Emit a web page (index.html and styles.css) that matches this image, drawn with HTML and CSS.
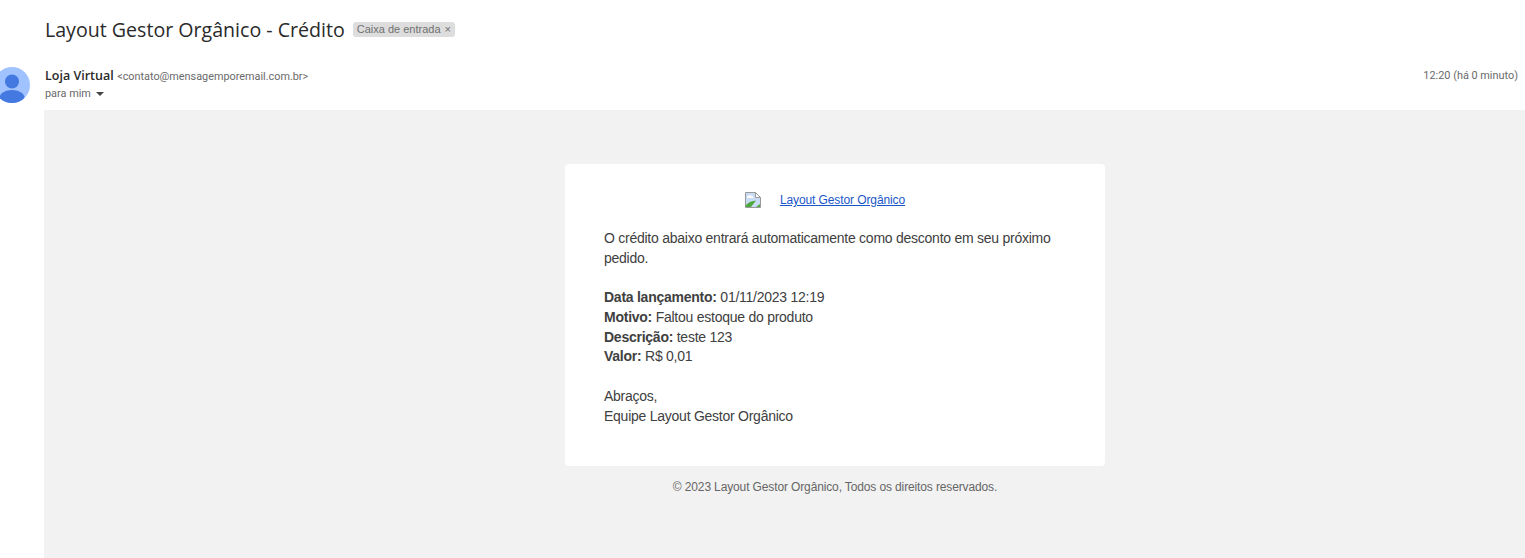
FILE: index.html
```html
<!DOCTYPE html>
<html lang="pt-BR">
<head>
  <meta charset="UTF-8">
  <title>Layout Gestor Orgânico - Crédito</title>
  <link rel="stylesheet" href="styles.css">
</head>
<body>
  <div class="subject-row">
    <h1 class="subject">Layout Gestor Orgânico - Crédito</h1>
    <span class="label">Caixa de entrada <span class="label-x">×</span></span>
  </div>

  <div class="message">
    <svg class="avatar" width="36" height="36" viewBox="0 0 36 36">
      <defs><clipPath id="avatar-clip"><circle cx="18" cy="18" r="18"/></clipPath></defs>
      <circle cx="18" cy="18" r="18" fill="#a0c3ff"/>
      <g clip-path="url(#avatar-clip)" fill="#4479e1">
        <circle cx="18" cy="14.5" r="7"/>
        <ellipse cx="18" cy="31" rx="12.5" ry="8"/>
      </g>
    </svg>
    <div class="message-main">
      <div class="message-head">
        <div>
          <div class="sender"><b class="sender-name">Loja Virtual</b> <span class="sender-mail">&lt;contato@mensagemporemail.com.br&gt;</span></div>
          <div class="to">para mim <span class="to-arrow"></span></div>
        </div>
        <div class="time">12:20 (há 0 minuto)</div>
      </div>

      <div class="mail-body">
        <div class="mail-inner">
          <div class="card">
            <div class="logo-row">
              <svg class="broken-img" width="16" height="16" viewBox="0 0 16 16">
                <path d="M.5.5h10l5 5v10H.5z" fill="#c9dcf5" stroke="#9a9a9a"/>
                <path d="M10.5.5v5h5z" fill="#fff" stroke="#9a9a9a"/>
                <path d="M2 5c1-2 4-2 5-1 1 0 2 1 1 2H2z" fill="#fff"/>
                <path d="M1 15v-2c3-3 6-4 10-4.500l-5 6.500z" fill="#4fa83d"/>
                <path d="M11 15l4-3v3z" fill="#4fa83d"/>
              </svg>
              <a class="logo-link" href="#">Layout Gestor Orgânico</a>
            </div>
            <p>O crédito abaixo entrará automaticamente como desconto em seu próximo pedido.</p>
            <p>
              <b>Data lançamento:</b> 01/11/2023 12:19<br>
              <b>Motivo:</b> Faltou estoque do produto<br>
              <b>Descrição:</b> teste 123<br>
              <b>Valor:</b> R$ 0,01
            </p>
            <p>Abraços,<br>Equipe Layout Gestor Orgânico</p>
          </div>
          <div class="copyright">© 2023 Layout Gestor Orgânico, Todos os direitos reservados.</div>
        </div>
      </div>
    </div>
  </div>
</body>
</html>
```

FILE: styles.css
```css
html, body {
  height: 558px;
  overflow: hidden;
}
body {
  margin: 0;
  font-family: "Liberation Sans", Arial, sans-serif;
  color: #222;
  background-color: #fff;
}
.subject-row {
  display: flex;
  align-items: center;
  gap: 8px;
  padding: 16px 0 0 45px;
  height: 26px;
}
.subject {
  margin: 0;
  font-family: "Open Sans", sans-serif;
  font-size: 19.6px;
  font-weight: 400;
  color: #2a2a2a;
}
.label {
  background-color: #ddd;
  border-radius: 3px;
  color: #707070;
  font-size: 11px;
  padding: 1px 4px;
  line-height: 13px;
}
.label-x {
  margin-left: 1px;
}
.message {
  display: flex;
  margin-top: 25px;
  margin-left: -6px;
  gap: 14px;
}
.avatar {
  flex: none;
}
.message-main {
  flex: 1;
  min-width: 0;
}
.message-head {
  display: flex;
  justify-content: space-between;
  height: 43px;
  padding: 0 7px 0 1px;
}
.sender {
  line-height: 15px;
}
.sender-name {
  font-family: "Open Sans", sans-serif;
  font-size: 12.5px;
  font-weight: 600;
  color: #2a2a2a;
}
.sender-mail {
  margin-left: -1px;
  font-family: "Roboto", sans-serif;
  font-size: 10.85px;
  color: #6a6a6a;
}
.to {
  font-family: "Roboto", sans-serif;
  font-size: 10.9px;
  line-height: 20px;
  color: #6a6a6a;
}
.to-arrow {
  display: inline-block;
  margin-left: 2px;
  vertical-align: middle;
  border: 4px solid transparent;
  border-top-color: #444;
  border-bottom: 0;
}
.time {
  font-family: "Roboto", sans-serif;
  font-size: 10.9px;
  line-height: 18px;
  color: #6a6a6a;
}
.mail-body {
  background-color: #f2f2f2;
  height: 448px;
  padding-top: 54px;
  box-sizing: border-box;
}
.mail-inner {
  width: 540px;
  margin-left: 521px;
}
.card {
  height: 302px;
  box-sizing: border-box;
  padding: 28px 39px 0;
  background-color: #fff;
  border-radius: 4px;
  font-size: 14px;
  letter-spacing: -0.25px;
  line-height: 19.65px;
  color: #404040;
}
.card p {
  margin: 0 0 20px;
}
.logo-row {
  display: flex;
  justify-content: center;
  align-items: center;
  gap: 19px;
  height: 16px;
  margin-bottom: 21px;
  padding-right: 20px;
}
.logo-link {
  margin-top: 2px;
  font-size: 12px;
  letter-spacing: -0.1px;
  color: #1a56c8;
}
.copyright {
  margin-top: 14px;
  text-align: center;
  font-size: 12px;
  letter-spacing: -0.13px;
  line-height: 14px;
  color: #666;
}
```
